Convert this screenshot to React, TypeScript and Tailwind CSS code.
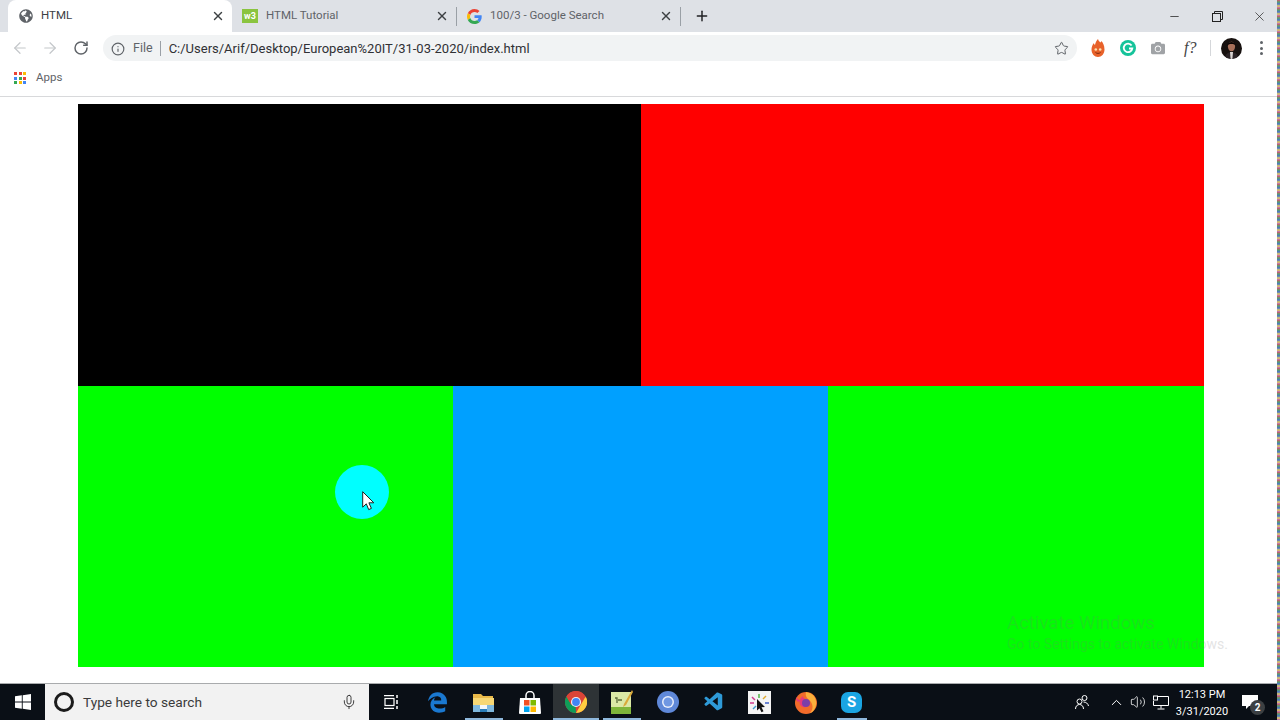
import React from "react";
import { ArrowLeft, ArrowRight, RotateCw, Info, Star, X, Plus, Mic, ChevronUp, Volume2, Minus } from "lucide-react";
import { FaGlobeAmericas, FaEdgeLegacy, FaCamera } from "react-icons/fa";
import { VscVscode } from "react-icons/vsc";

const Tab = ({ icon, title, active, sep }: { icon: React.ReactNode; title: string; active?: boolean; sep?: boolean }) => (
  <div
    className={
      "relative flex h-[32px] w-[224px] items-center pl-[10px] " +
      (active ? "rounded-t-[8px] bg-white pr-[8px] text-[#3c4043]" : "pr-[7px] text-[#5f6368]")
    }
  >
    <div className="flex h-[16px] w-[16px] items-center justify-center">{icon}</div>
    <span className={"flex-1 text-[11.500px] " + (active ? "ml-[7px]" : "ml-[8px]")}>{title}</span>
    <X size={14} strokeWidth={2.4} className={active ? "mr-[-1px] text-[#3c4043]" : "text-[#3c4043]"} />
    {sep && <div className="absolute right-[-1px] top-[7px] h-[19px] w-px bg-[#9aa0a6]" />}
  </div>
);

const W3Icon = () => (
  <div className="flex h-[14px] w-[16px] items-center justify-center bg-[#8ac43f] text-[9px] font-bold leading-none text-white">
    w3
  </div>
);

const GoogleIcon = () => (
  <svg width="15" height="15" viewBox="0 0 48 48">
    <path fill="#EA4335" d="M24 9.5c3.5 0 6.7 1.2 9.2 3.600l6.900-6.900C35.900 2.400 30.400 0 24 0 14.600 0 6.500 5.400 2.600 13.200l8 6.200C12.500 13.600 17.800 9.500 24 9.500z" />
    <path fill="#4285F4" d="M47 24.500c0-1.600-.1-3.100-.4-4.500H24v9h12.900c-.6 3-2.200 5.500-4.700 7.200l7.700 6C44.400 37.900 47 31.800 47 24.500z" />
    <path fill="#FBBC05" d="M10.600 28.600c-.5-1.400-.8-3-.8-4.600s.3-3.200.8-4.600l-8-6.200C.9 16.500 0 20.100 0 24s.9 7.500 2.600 10.800l8-6.200z" />
    <path fill="#34A853" d="M24 48c6.500 0 11.900-2.100 15.900-5.800l-7.700-6c-2.200 1.400-4.900 2.300-8.200 2.300-6.200 0-11.500-4.200-13.400-9.800l-8 6.200C6.500 42.600 14.600 48 24 48z" />
  </svg>
);

const AppsIcon = () => {
  const colors = ["#ea4335", "#ea4335", "#fbbc05", "#4285f4", "#34a853", "#ea4335", "#34a853", "#fbbc05", "#4285f4"];
  return (
    <div className="grid h-[12px] w-[12px] grid-cols-3 gap-[1.500px]">
      {colors.map((c, i) => (
        <svg key={i} viewBox="0 0 3 3" className="h-[3px] w-[3px]">
          <rect width="3" height="3" fill={c} />
        </svg>
      ))}
    </div>
  );
};

const Flame = () => (
  <svg width="14" height="18" viewBox="0 0 14 18">
    <path fill="#e8622a" d="M7 0c.5 2 1.500 2.500 2.500 3.500C10 3 10.300 2.500 10.300 2c1.500 1.500 3.200 4 3.200 8.500C13.500 15 10.500 18 7 18s-6.500-3-6.500-7.500C.5 8 1.500 5.500 3 4c0 1 .3 1.500 1 2C4.300 4 5.500 1.500 7 0z" />
    <circle cx="4.800" cy="10.500" r="1.300" fill="#fbe3b0" />
    <circle cx="9.200" cy="10.500" r="1.300" fill="#fbe3b0" />
    <path d="M4.500 13.500c1.500 1.200 3.500 1.200 5 0" stroke="#7a2a10" strokeWidth="1" fill="none" />
  </svg>
);

const Grammarly = () => (
  <svg width="16" height="16" viewBox="0 0 16 16">
    <circle cx="8" cy="8" r="8" fill="#15c39a" />
    <path d="M11.600 5.400A4.300 4.300 0 1 0 12.300 8.500H9" stroke="#fff" strokeWidth="1.800" fill="none" />
  </svg>
);

const Avatar = () => (
  <svg width="21" height="21" viewBox="0 0 21 21">
    <clipPath id="av"><circle cx="10.500" cy="10.500" r="10.500" /></clipPath>
    <g clipPath="url(#av)">
      <rect width="21" height="21" fill="#17110f" />
      <ellipse cx="10.500" cy="8.500" rx="3.600" ry="4.800" fill="#a8705a" />
      <path d="M6.500 7c0-4 8-4 8 0-2-1.500-6-1.500-8 0z" fill="#0a0606" />
      <path d="M4 21c0-5 3-7 6.500-7s6.500 2 6.500 7z" fill="#2b2326" />
      <path d="M9 14h3l-.6 7h-1.800z" fill="#d9d4d2" />
    </g>
  </svg>
);

const WinLogo = () => (
  <svg width="16" height="16" viewBox="0 0 16 16" fill="#fff">
    <path d="M0 2.300 6.800 1.300V7.500H0zM7.700 1.200 16 0V7.500H7.700zM0 8.400H6.800V14.700L0 13.700zM7.700 8.400H16V16L7.700 14.800z" />
  </svg>
);

const TaskView = () => (
  <svg width="16" height="14" viewBox="0 0 16 14" fill="none" stroke="#fff" strokeWidth="1.200">
    <path d="M0 .6h10M0 13.400h10" />
    <rect x="1" y="3.500" width="9" height="7" />
    <path d="M13 0v3M13 5v4M13 11v3" strokeWidth="1.500" />
  </svg>
);

const Explorer = () => (
  <svg width="21" height="19" viewBox="0 0 21 19">
    <path d="M0 1h8l2 2h10v4H0z" fill="#e9b949" />
    <rect y="5" width="21" height="14" fill="#f7d774" />
    <rect x="0" y="12" width="21" height="7" fill="#7fb8de" />
    <rect x="7" y="12" width="7" height="4" fill="#f4f7fa" />
    <rect x="7" y="16" width="7" height="3" fill="#2a7db8" />
  </svg>
);

const Store = () => (
  <svg width="22" height="23" viewBox="0 0 22 23">
    <path d="M7 7V4.500a4 4 0 0 1 8 0V7" stroke="#fff" strokeWidth="1.500" fill="none" />
    <path d="M1 7h20l1 15a1 1 0 0 1-1 1H1a1 1 0 0 1-1-1z" fill="#fff" />
    <rect x="5" y="9" width="5.500" height="5.500" fill="#f25022" />
    <rect x="11.500" y="9" width="5.500" height="5.500" fill="#7fba00" />
    <rect x="5" y="15.500" width="5.500" height="5.500" fill="#00a4ef" />
    <rect x="11.500" y="15.500" width="5.500" height="5.500" fill="#ffb900" />
  </svg>
);

const Chrome = () => (
  <svg width="22" height="22" viewBox="0 0 48 48">
    <circle cx="24" cy="24" r="24" fill="#db4437" />
    <path d="M24 48a24 24 0 0 1-20.800-36L14 30.500h9z" fill="#0f9d58" />
    <path d="M24 48l10.500-18L45 12a24 24 0 0 1-21 36z" fill="#ffcd40" />
    <path d="M3.200 12 14 30.500 24 14h21C40.900 5.700 33 0 24 0 15 0 7.300 4.900 3.200 12z" fill="#db4437" />
    <circle cx="24" cy="24" r="11" fill="#f1f1f1" />
    <circle cx="24" cy="24" r="8.500" fill="#4285f4" />
  </svg>
);

const Notepad = () => (
  <svg width="22" height="24" viewBox="0 0 22 24">
    <rect y="2" width="20" height="22" fill="#dbe8a6" />
    <rect y="17" width="20" height="7" fill="#7fb53a" />
    <path d="M4 8h2v5M7 10h4" stroke="#5b6b3a" strokeWidth="1.300" fill="none" />
    <path d="M21 0 13 14l-1 3 3-2L22 2z" fill="#d9a93a" />
  </svg>
);

const Chromium = () => (
  <svg width="22" height="22" viewBox="0 0 22 22">
    <circle cx="11" cy="11" r="11" fill="#5f88d8" />
    <circle cx="11" cy="11" r="6" fill="#e8eefb" />
    <circle cx="11" cy="11" r="4.500" fill="#6f97e2" />
  </svg>
);

const Clicker = () => (
  <svg width="23" height="23" viewBox="0 0 23 23">
    <rect width="23" height="23" fill="#f4f4f4" />
    <path d="M11 3v4" stroke="#54b948" strokeWidth="1.500" />
    <path d="M4 6l3 3" stroke="#d13c8f" strokeWidth="1.500" />
    <path d="M18 5l-3 3" stroke="#e0a82e" strokeWidth="1.500" />
    <path d="M2 12h4" stroke="#d13c8f" strokeWidth="1.500" />
    <path d="M17 12h4" stroke="#3e5fc9" strokeWidth="1.500" />
    <path d="M5 18l3-3" stroke="#3e9bd1" strokeWidth="1.500" />
    <path d="M9 8l8 8-3.500.3 2 4-2 1-2-4L9 19.500z" fill="#111" />
  </svg>
);

const Firefox = () => (
  <svg width="22" height="23" viewBox="0 0 22 23">
    <circle cx="11" cy="12" r="11" fill="#f26b2a" />
    <path d="M11 1c5 1 9 3 10 9 1 5-2 11-6 12 4-4 3-10-1-13-2-2-4-4-3-8z" fill="#fbb03b" />
    <path d="M1 6c1 2 3 3 4 3 0-2 2-3 3-4-1 3 6 3 6 7 0 3-3 5-6 4-3-1-4-4-3-6-2 2-4 0-4-4z" fill="#e8397a" />
    <circle cx="11" cy="12" r="4" fill="#7b3fa8" />
  </svg>
);

const Skype = () => (
  <div className="flex h-[21px] w-[21px] items-center justify-center rounded-[7px] bg-[#1aa5e3] text-[15px] font-bold leading-none text-white">
    S
  </div>
);

const TaskIcon = ({ children, line, hl }: { children: React.ReactNode; line?: string; hl?: boolean }) => (
  <div className={"relative flex h-full w-[46px] items-center justify-center " + (hl ? "bg-[#2e3336]" : "")}>
    {children}
    {line && <div className={"absolute bottom-0 h-[2px] bg-[#8fb8dc] " + line} />}
  </div>
);

export default function App() {
  return (
    <div className="flex h-[720px] w-[1280px] overflow-hidden bg-white font-['Roboto','Noto_Sans',sans-serif]">
      <div className="relative flex w-[1277px] flex-col">
        {/* tab strip */}
        <div className="flex h-[32px] items-center bg-[#dee1e6] pl-[8px]">
          <Tab active title="HTML" icon={<FaGlobeAmericas size={14} className="text-[#5f6368]" />} />
          <Tab title="HTML Tutorial" icon={<W3Icon />} sep />
          <Tab title="100/3 - Google Search" icon={<GoogleIcon />} sep />
          <Plus size={16} strokeWidth={2.2} className="ml-[14px] text-[#202124]" />
          <div className="ml-auto flex items-center text-[#222]">
            <div className="flex w-[43px] justify-center"><Minus size={13} strokeWidth={1.4} /></div>
            <div className="flex w-[43px] justify-center">
              <svg width="11" height="11" viewBox="0 0 11 11" fill="none" stroke="#222" strokeWidth="1">
                <rect x=".5" y="2.500" width="8" height="8" />
                <path d="M2.500 2.500v-2h8v8h-2" />
              </svg>
            </div>
            <div className="mr-[-2px] flex w-[40px] justify-center"><X size={15} strokeWidth={1.1} /></div>
          </div>
        </div>

        {/* toolbar */}
        <div className="flex h-[32px] items-center bg-white">
          <div className="flex w-[103px] items-center pl-[11px]">
            <ArrowLeft size={18} strokeWidth={1.6} className="text-[#c4c7ca]" />
            <ArrowRight size={18} strokeWidth={1.6} className="ml-[12px] text-[#c4c7ca]" />
            <RotateCw size={16} strokeWidth={2.2} className="ml-[14px] text-[#5f6368]" />
          </div>
          <div className="flex h-[26px] w-[974px] items-center rounded-full bg-[#f1f3f4] pl-[8px] pr-[8px] pt-px">
            <Info size={14} className="text-[#5f6368]" />
            <span className="ml-[8px] text-[12.500px] text-[#5f6368]">File</span>
            <div className="ml-[7px] h-[15px] w-px bg-[#9aa0a6]" />
            <span className="ml-[8px] flex-1 text-[13px] text-[#303134]">C:/Users/Arif/Desktop/European%20IT/31-03-2020/index.html</span>
            <Star size={15} strokeWidth={1.6} className="text-[#5f6368]" />
          </div>
          <div className="ml-[14px] flex w-[14px] justify-center"><Flame /></div>
          <div className="ml-[15px]"><Grammarly /></div>
          <FaCamera size={14} className="ml-[15px] text-[#a0a3a6]" />
          <span className="ml-[19px] font-['Liberation_Serif',serif] text-[16px] italic text-[#444]">f?</span>
          <div className="ml-[14px] h-[16px] w-px bg-[#d5d7da]" />
          <div className="ml-[10px]"><Avatar /></div>
          <div className="ml-[18px] flex flex-col gap-[2.500px]">
            <div className="h-[3px] w-[3px] rounded-full bg-[#5f6368]" />
            <div className="h-[3px] w-[3px] rounded-full bg-[#5f6368]" />
            <div className="h-[3px] w-[3px] rounded-full bg-[#5f6368]" />
          </div>
        </div>

        {/* bookmarks */}
        <div className="flex h-[33px] items-center border-b border-[#d8d9db] bg-white pb-[4px] pl-[14px]">
          <AppsIcon />
          <span className="ml-[10px] text-[11.500px] text-[#5f6368]">Apps</span>
        </div>

        {/* page */}
        <div className="flex flex-1 flex-col bg-white pl-[78px] pt-[7px]">
          <div className="flex h-[282px] w-[1126px]">
            <div className="w-[563px] bg-black" />
            <div className="w-[563px] bg-[#ff0000]" />
          </div>
          <div className="flex h-[281px] w-[1126px]">
            <div className="w-[375px] bg-[#00ff00]" />
            <div className="w-[375px] bg-[#00a0ff]" />
            <div className="w-[376px] bg-[#00ff00]" />
          </div>
        </div>

        {/* taskbar */}
        <div className="flex h-[37px] items-stretch border-t border-[#a9abad] bg-[#0a0f16]">
          <div className="flex w-[45px] items-center justify-center"><WinLogo /></div>
          <div className="flex w-[323.500px] items-center bg-[#f2f2f2] pl-[9px] pr-[12px]">
            <div className="h-[20px] w-[20px] rounded-full border-[3px] border-[#1b1b1b]" />
            <span className="ml-[9px] flex-1 text-[13.700px] text-[#3b3b3b]">Type here to search</span>
            <Mic size={16} strokeWidth={1.4} className="text-[#333]" />
          </div>
          <TaskIcon><TaskView /></TaskIcon>
          <TaskIcon><FaEdgeLegacy size={21} className="text-[#1a78d0]" /></TaskIcon>
          <TaskIcon line="w-[38px]"><Explorer /></TaskIcon>
          <TaskIcon><Store /></TaskIcon>
          <TaskIcon hl line="w-[46px]"><Chrome /></TaskIcon>
          <TaskIcon line="w-[38px]"><Notepad /></TaskIcon>
          <TaskIcon><Chromium /></TaskIcon>
          <TaskIcon><VscVscode size={22} className="text-[#2e9ad8]" /></TaskIcon>
          <TaskIcon><Clicker /></TaskIcon>
          <TaskIcon><Firefox /></TaskIcon>
          <TaskIcon line="w-[30px]"><Skype /></TaskIcon>

          <div className="ml-auto flex items-center pr-[15px] text-white">
            <svg width="14" height="16" viewBox="0 0 14 16" fill="none" stroke="#fff" strokeWidth="1">
              <circle cx="9.500" cy="4" r="2.500" />
              <circle cx="4.500" cy="7.500" r="2.500" />
              <path d="M.5 15c0-3 2-4.500 4-4.500S8.500 12 8.500 15M8.500 8c2.500 0 4.500 1.500 5 4" />
            </svg>
            <ChevronUp size={17} strokeWidth={1.4} className="ml-[19px]" />
            <Volume2 size={16} strokeWidth={1.2} className="ml-[5px]" />
            <svg className="ml-[7px]" width="16" height="15" viewBox="0 0 16 15" fill="none" stroke="#fff" strokeWidth="1">
              <path d="M5 1.500h10.500v9H.5V6M8 10.500v3M4.500 14h7" />
              <rect x=".5" y="1" width="4" height="4" fill="#0a0f16" />
            </svg>
            <div className="ml-[5px] flex w-[56px] flex-col items-center pt-[1px] text-[11px] leading-[17px]">
              <span>12:13 PM</span>
              <span>3/31/2020</span>
            </div>
            <div className="relative ml-[12px] flex h-[36px] w-[20px] items-center">
              <svg width="16" height="14" viewBox="0 0 16 14" fill="#fff">
                <path d="M0 0h16v11H7l-3 3v-3H0z" />
              </svg>
              <div className="absolute left-[8px] top-[16px] flex h-[15px] w-[15px] items-center justify-center rounded-full bg-[#3c4043] text-[10px] font-bold">2</div>
            </div>
          </div>
        </div>

        {/* cursor highlight over the green block */}
        <div className="absolute left-[335px] top-[465px] h-[54px] w-[54px] rounded-full bg-[#00ffff]" />
        <svg className="absolute left-[362px] top-[491px]" width="12" height="20" viewBox="0 0 12 20">
          <path d="M.7.7v15.500l3.600-3.400 2.400 5.800 2.700-1.200-2.500-5.600h4.900z" fill="#fff" stroke="#222" strokeWidth="1" />
        </svg>

        {/* activation watermark */}
        <div className="absolute left-[1007px] top-[612px] whitespace-nowrap text-[#777] opacity-20">
          <div className="text-[18.600px] leading-[22px]">Activate Windows</div>
          <div className="text-[14px] leading-[20px]">Go to Settings to activate Windows.</div>
        </div>
      </div>
      <div className="w-[3px] bg-[repeating-linear-gradient(180deg,#d94f70_0px,#5aa469_2px,#4a6fd1_4px,#e8d25a_6px,#b05cc4_8px)]" />
    </div>
  );
}
